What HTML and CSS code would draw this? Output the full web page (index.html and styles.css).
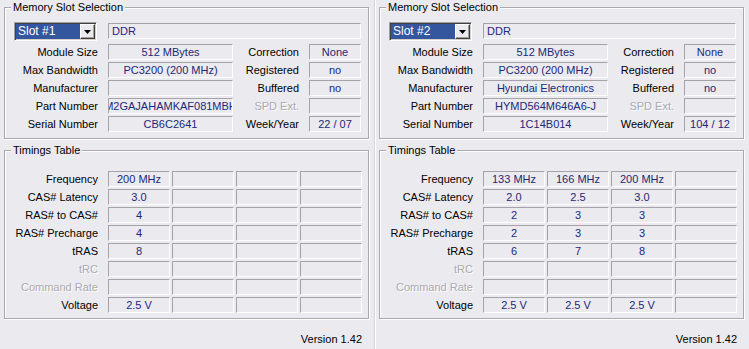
FILE: index.html
```html
<!DOCTYPE html>
<html lang="en">

<head>
    <meta charset="UTF-8">
    <meta name="viewport" content="width=device-width, initial-scale=1.0">
    <link rel="stylesheet" href="styles.css">
    <title>SPD</title>
</head>

<body>
    <div class="spd">
        <!-- Slot #1 -->
        <div class="panel">
            <div class="group slots">
                <div class="group-title">Memory Slot Selection</div>
                <div class="slot-grid">
                    <div class="combo">
                        <span class="combo-value">Slot #1</span>
                        <span class="combo-btn"><svg width="7" height="4" viewBox="0 0 7 4"><path d="M0 0h7L3.5 4z" /></svg></span>
                    </div>
                    <div class="field field-left type">DDR</div>

                    <div class="label">Module Size</div>
                    <div class="field">512 MBytes</div>
                    <div class="label">Correction</div>
                    <div class="field">None</div>

                    <div class="label">Max Bandwidth</div>
                    <div class="field">PC3200 (200 MHz)</div>
                    <div class="label">Registered</div>
                    <div class="field">no</div>

                    <div class="label">Manufacturer</div>
                    <div class="field"></div>
                    <div class="label">Buffered</div>
                    <div class="field">no</div>

                    <div class="label">Part Number</div>
                    <div class="field">M2GAJAHAMKAF081MBH</div>
                    <div class="label disabled">SPD Ext.</div>
                    <div class="field"></div>

                    <div class="label">Serial Number</div>
                    <div class="field">CB6C2641</div>
                    <div class="label">Week/Year</div>
                    <div class="field">22 / 07</div>
                </div>
            </div>

            <div class="group timings">
                <div class="group-title">Timings Table</div>
                <div class="timing-grid">
                    <div class="label">Frequency</div>
                    <div class="field">200 MHz</div><div class="field"></div><div class="field"></div><div class="field"></div>
                    <div class="label">CAS# Latency</div>
                    <div class="field">3.0</div><div class="field"></div><div class="field"></div><div class="field"></div>
                    <div class="label">RAS# to CAS#</div>
                    <div class="field">4</div><div class="field"></div><div class="field"></div><div class="field"></div>
                    <div class="label">RAS# Precharge</div>
                    <div class="field">4</div><div class="field"></div><div class="field"></div><div class="field"></div>
                    <div class="label">tRAS</div>
                    <div class="field">8</div><div class="field"></div><div class="field"></div><div class="field"></div>
                    <div class="label disabled">tRC</div>
                    <div class="field"></div><div class="field"></div><div class="field"></div><div class="field"></div>
                    <div class="label disabled">Command Rate</div>
                    <div class="field"></div><div class="field"></div><div class="field"></div><div class="field"></div>
                    <div class="label">Voltage</div>
                    <div class="field">2.5 V</div><div class="field"></div><div class="field"></div><div class="field"></div>
                </div>
            </div>

            <div class="version">Version 1.42</div>
        </div>

        <!-- Slot #2 -->
        <div class="panel">
            <div class="group slots">
                <div class="group-title">Memory Slot Selection</div>
                <div class="slot-grid">
                    <div class="combo">
                        <span class="combo-value">Slot #2</span>
                        <span class="combo-btn"><svg width="7" height="4" viewBox="0 0 7 4"><path d="M0 0h7L3.5 4z" /></svg></span>
                    </div>
                    <div class="field field-left type">DDR</div>

                    <div class="label">Module Size</div>
                    <div class="field">512 MBytes</div>
                    <div class="label">Correction</div>
                    <div class="field">None</div>

                    <div class="label">Max Bandwidth</div>
                    <div class="field">PC3200 (200 MHz)</div>
                    <div class="label">Registered</div>
                    <div class="field">no</div>

                    <div class="label">Manufacturer</div>
                    <div class="field">Hyundai Electronics</div>
                    <div class="label">Buffered</div>
                    <div class="field">no</div>

                    <div class="label">Part Number</div>
                    <div class="field">HYMD564M646A6-J</div>
                    <div class="label disabled">SPD Ext.</div>
                    <div class="field"></div>

                    <div class="label">Serial Number</div>
                    <div class="field">1C14B014</div>
                    <div class="label">Week/Year</div>
                    <div class="field">104 / 12</div>
                </div>
            </div>

            <div class="group timings">
                <div class="group-title">Timings Table</div>
                <div class="timing-grid">
                    <div class="label">Frequency</div>
                    <div class="field">133 MHz</div><div class="field">166 MHz</div><div class="field">200 MHz</div><div class="field"></div>
                    <div class="label">CAS# Latency</div>
                    <div class="field">2.0</div><div class="field">2.5</div><div class="field">3.0</div><div class="field"></div>
                    <div class="label">RAS# to CAS#</div>
                    <div class="field">2</div><div class="field">3</div><div class="field">3</div><div class="field"></div>
                    <div class="label">RAS# Precharge</div>
                    <div class="field">2</div><div class="field">3</div><div class="field">3</div><div class="field"></div>
                    <div class="label">tRAS</div>
                    <div class="field">6</div><div class="field">7</div><div class="field">8</div><div class="field"></div>
                    <div class="label disabled">tRC</div>
                    <div class="field"></div><div class="field"></div><div class="field"></div><div class="field"></div>
                    <div class="label disabled">Command Rate</div>
                    <div class="field"></div><div class="field"></div><div class="field"></div><div class="field"></div>
                    <div class="label">Voltage</div>
                    <div class="field">2.5 V</div><div class="field">2.5 V</div><div class="field">2.5 V</div><div class="field"></div>
                </div>
            </div>

            <div class="version">Version 1.42</div>
        </div>
    </div>
</body>

</html>
```

FILE: styles.css
```css
/* General */
body {
    margin: 0;
    background-color: #ebeaef;
    color: #000;
    font-family: "Liberation Sans", Arial, sans-serif;
    font-size: 11px;
    line-height: 13px;
}

.spd {
    display: flex;
    width: 749px;
    height: 349px;
}

.panel {
    width: 375px;
    box-sizing: border-box;
    padding: 7px 0 0 4px;
    border-right: 1px solid #d6d5da;
}

.panel + .panel {
    width: 374px;
    padding-left: 3px;
    border-right: none;
    border-left: 1px solid #fff;
}

/* Group boxes */
.group {
    width: 365px;
    box-sizing: border-box;
    border: 1px solid #a9a8ae;
    box-shadow: inset 1px 1px 0 #fff, 1px 1px 0 #fff;
}

.group-title {
    width: fit-content;
    margin: -7px 0 0 6px;
    padding: 0 2px;
    background-color: #ebeaef;
}

.slots {
    padding-bottom: 6px;
}

.timings {
    margin-top: 11px;
    padding-bottom: 5px;
}

/* Grids */
.slot-grid {
    display: grid;
    grid-template-columns: 93px 125px 56px 52px;
    grid-template-rows: 20px repeat(5, 16px);
    column-gap: 10px;
    row-gap: 2px;
    margin-top: 8px;
}

.timing-grid {
    display: grid;
    grid-template-columns: 101px repeat(4, 62px);
    grid-auto-rows: 16px;
    column-gap: 2px;
    row-gap: 2px;
    margin-top: 14px;
}

.timing-grid .label {
    padding-right: 8px;
}

.label {
    display: flex;
    align-items: center;
    justify-content: flex-end;
    padding-top: 1px;
    white-space: nowrap;
}

.label.disabled {
    color: #aaa9ae;
    text-shadow: 1px 1px 0 #fff;
}

.field {
    display: flex;
    align-items: center;
    justify-content: center;
    height: 16px;
    box-sizing: border-box;
    padding-top: 1px;
    border: 1px solid;
    border-color: #a4a3a9 #fff #fff #a4a3a9;
    color: #1c2878;
    white-space: nowrap;
    overflow: hidden;
}

.field-left {
    justify-content: flex-start;
    padding-left: 3px;
}

.type {
    grid-column: 2 / 5;
    margin-top: 1px;
}

/* Combo box */
.combo {
    display: flex;
    width: 83px;
    height: 19px;
    margin-left: 9px;
    box-sizing: border-box;
    padding: 1px;
    border: 1px solid;
    border-color: #a0a0a0 #fff #fff #a0a0a0;
    box-shadow: inset 1px 1px 0 #404040, inset -1px -1px 0 #d4d0c8;
}

.combo-value {
    flex: 1;
    padding-left: 2px;
    background-color: #34569f;
    color: #fff;
    font-size: 12px;
    line-height: 15px;
}

.combo-btn {
    display: flex;
    align-items: center;
    justify-content: center;
    width: 15px;
    box-sizing: border-box;
    border: 1px solid;
    border-color: #fff #404040 #404040 #fff;
    box-shadow: inset -1px -1px 0 #a0a0a0;
    background-color: #ebeaef;
}

.version {
    width: 365px;
    box-sizing: border-box;
    margin-top: 14px;
    padding-right: 7px;
    text-align: right;
}
```
